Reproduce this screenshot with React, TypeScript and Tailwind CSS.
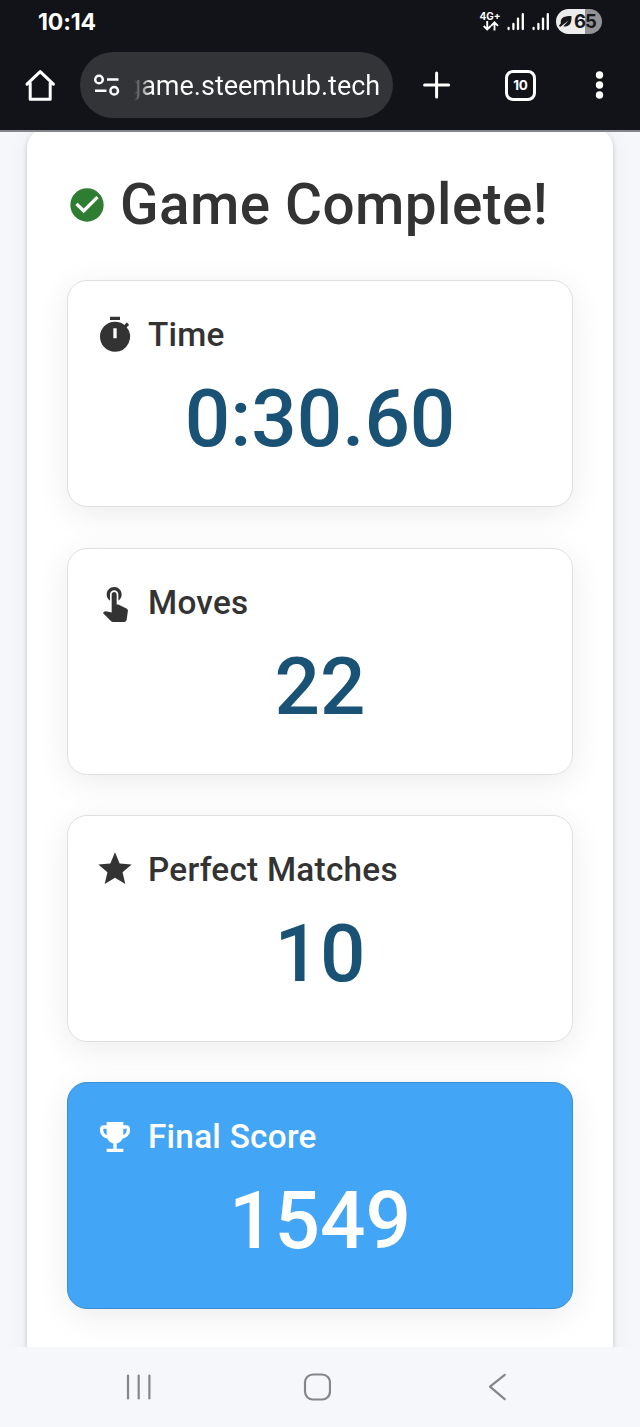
import type { ReactNode } from "react";
import { MdCheckCircle, MdEmojiEvents, MdStar, MdTimer, MdTouchApp } from "react-icons/md";

function Signal() {
  return (
    <svg className="h-[20px] w-[18px]" viewBox="0 0 18 20" stroke="#fff" strokeWidth="2.3" strokeLinecap="round">
      <path d="M1.6 17v-1M6.4 17v-5" />
      <path d="M11 17V6.6M15.8 17V2.2" />
    </svg>
  );
}

function StatusBar() {
  return (
    <div className="flex h-[52px] items-start pl-[38px] pr-[38px] text-white">
      <span className="mt-[8px] font-[Inter,sans-serif] text-[23px] leading-[28px] font-bold tracking-[-0.1px]">10:14</span>
      <div className="mt-[9px] ml-auto flex h-[25px] items-start">
        <div className="mt-[2px] flex w-[22px] flex-col items-center">
          <span className="-ml-[2px] font-[Inter,sans-serif] text-[10px] leading-[11px] font-bold">4G+</span>
          <svg className="-mt-px h-[10px] w-[16px]" viewBox="0 0 16 10" fill="none" stroke="#fff" strokeWidth="1.9">
            <path d="M4.2 0v8M.7 5l3.5 3.5L7.7 5M11.5 9.5V1.4M8 4.9l3.5-3.5L15 4.9" />
          </svg>
        </div>
        <span className="ml-[5px] mt-[3px]"><Signal /></span>
        <span className="ml-[7px] mt-[3px]"><Signal /></span>
        <div className="ml-[6px] flex h-[25px] w-[46px] items-center rounded-full bg-[linear-gradient(90deg,#ececec_0,#ececec_29px,#929294_29px)] pl-[3px]">
          <svg className="h-[13px] w-[14px] shrink-0" viewBox="0 0 14 13">
            <path d="M1.8 8.4C1 2.2 6 1 12.4 1c.8 6.5-2 11.6-8 10.2L9.6 5.5 1 12 0 10.6z" fill="#17181c" />
          </svg>
          <span className="ml-px font-[Inter,sans-serif] text-[18.5px] font-bold tracking-[-1px] text-[#17181c]">65</span>
        </div>
      </div>
    </div>
  );
}

function BrowserBar() {
  return (
    <div className="flex h-[66px] items-center text-white">
      <svg className="ml-[24px] h-[34px] w-[32px] shrink-0" viewBox="0 0 32 34" fill="none" stroke="#fff" strokeWidth="3" strokeLinejoin="round" strokeLinecap="round">
        <path d="M3 16.2 16.2 3.6l13.2 12.6M6.2 15v16.2h20V15" />
      </svg>
      <div className="ml-[24px] flex h-[66px] w-[313px] shrink-0 items-center rounded-full bg-[#333438] pl-[13px]">
        <svg className="h-[24px] w-[28px] shrink-0" viewBox="0 0 28 24" fill="none" stroke="#fff" strokeWidth="2.5">
          <circle cx="6" cy="6.5" r="3.8" />
          <circle cx="21.2" cy="17.8" r="3.8" />
          <path d="M14 6.5h11.5M2 17.8h11.5" />
        </svg>
        <span className="ml-[3px] inline-block bg-[linear-gradient(90deg,#333438_10px,#fff_27px)] bg-clip-text pt-px pl-[2px] font-[Roboto,sans-serif] text-[27px] leading-[34px] whitespace-nowrap text-transparent">
          game.steemhub.tech
        </span>
      </div>
      <svg className="ml-[30px] h-[28px] w-[28px] shrink-0" viewBox="0 0 28 28" stroke="#fff" strokeWidth="3" strokeLinecap="round">
        <path d="M13.6 2v24M1.6 14h24" />
      </svg>
      <div className="ml-[54px] flex h-[31px] w-[31px] shrink-0 items-center justify-center rounded-[8px] border-[3px] border-white font-[Inter,sans-serif] text-[13.5px] font-bold tracking-[-0.3px]">10</div>
      <svg className="ml-[59px] h-[28px] w-[9px] shrink-0" viewBox="0 0 9 28" fill="#fff">
        <circle cx="4.5" cy="4" r="3.7" />
        <circle cx="4.5" cy="14" r="3.7" />
        <circle cx="4.5" cy="24" r="3.7" />
      </svg>
    </div>
  );
}

function StatCard({ icon, label, value, featured = false }: { icon: ReactNode; label: string; value: string; featured?: boolean }) {
  return (
    <div
      className={
        featured
          ? "h-[227px] rounded-[20px] border border-[#398fd8] bg-[#42a5f5] px-[27px] pt-[27px] text-white shadow-[0_7px_33px_rgba(0,0,0,0.08)]"
          : "h-[227px] rounded-[20px] border border-[#e0e0e0] bg-white px-[27px] pt-[27px] text-[#333] shadow-[0_7px_33px_rgba(0,0,0,0.08)]"
      }
    >
      <div className="flex h-[54px] items-center">
        <span className="mb-px text-[40px]">{icon}</span>
        <span className="ml-[13px] text-[33.33px] font-medium tracking-[0.25px]">{label}</span>
      </div>
      <div className={featured ? "mt-[11px] text-center text-[80px] leading-[93px] font-medium" : "mt-[11px] text-center text-[80px] leading-[93px] font-medium text-[#1a5276]"}>
        {value}
      </div>
    </div>
  );
}

function NavigationBar() {
  return (
    <div className="flex h-[80px] items-center bg-[#f5f7fb]">
      <svg className="ml-[126px] h-[28px] w-[26px]" viewBox="0 0 26 28" stroke="#85868a" strokeWidth="2.2" strokeLinecap="round">
        <path d="M2 2.5v23M12.7 2.5v23M23.4 2.5v23" />
      </svg>
      <svg className="ml-[151px] h-[28px] w-[28px]" viewBox="0 0 28 28" fill="none" stroke="#85868a" strokeWidth="2.2">
        <rect x="2" y="1.5" width="25" height="25" rx="8" />
      </svg>
      <svg className="ml-[157px] h-[28px] w-[18px]" viewBox="0 0 18 28" fill="none" stroke="#85868a" strokeWidth="2.2" strokeLinecap="round" strokeLinejoin="round">
        <path d="M16.7 1.8 2 13.7l14.7 12.5" />
      </svg>
    </div>
  );
}

export default function App() {
  return (
    <div className="flex h-[1427px] w-[640px] flex-col overflow-hidden bg-[#f5f7fb] font-[Roboto,sans-serif]">
      <header className="h-[132px] shrink-0 border-b-2 border-[#85868b] bg-[#121318]">
        <StatusBar />
        <BrowserBar />
      </header>
      <main className="h-[1215px] shrink-0 overflow-hidden px-[27px]">
        <div className="-mt-[4px] h-[1300px] rounded-[20px] bg-white px-[40px] pt-[42px] shadow-[0_2px_5px_rgba(0,0,0,0.18),0_5px_24px_rgba(0,0,0,0.05)]">
          <h1 className="flex h-[69px] items-center text-[56.67px] font-medium tracking-[0.42px] whitespace-nowrap text-[#333]">
            <MdCheckCircle className="mt-px h-[40px] w-[40px] shrink-0 text-[#2e7d32]" />
            <span className="ml-[13px]">Game Complete!</span>
          </h1>
          <div className="mt-[41.25px] flex flex-col gap-[40.35px]">
            <StatCard icon={<MdTimer />} label="Time" value="0:30.60" />
            <StatCard icon={<MdTouchApp />} label="Moves" value="22" />
            <StatCard icon={<MdStar />} label="Perfect Matches" value="10" />
            <StatCard icon={<MdEmojiEvents />} label="Final Score" value="1549" featured />
          </div>
        </div>
      </main>
      <NavigationBar />
    </div>
  );
}
